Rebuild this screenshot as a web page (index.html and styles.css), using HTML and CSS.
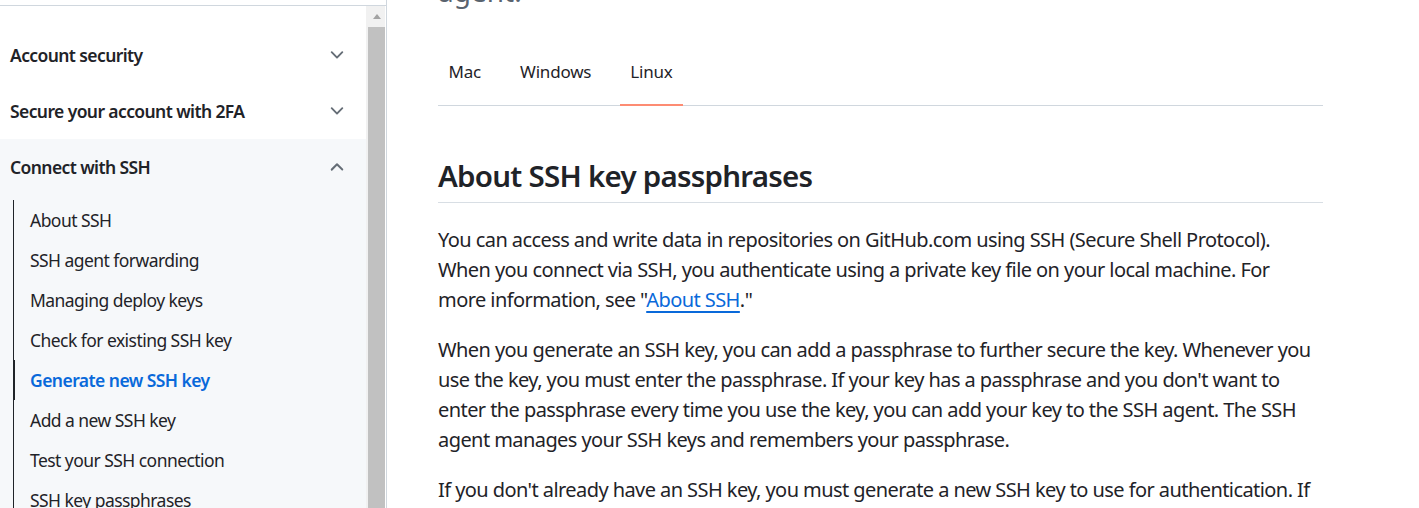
FILE: index.html
```html
<!DOCTYPE html>
<html lang="en">
<head>
<meta charset="utf-8">
<title>Generating a new SSH key</title>
<link rel="stylesheet" href="styles.css">
</head>
<body>
<aside class="sidebar">
  <div class="sidebar-scroll">
    <nav class="nav">
      <div class="cat">
        <span>Account security</span>
        <svg class="chev" viewBox="0 0 16 16" width="20" height="20"><path d="M12.78 5.22a.749.749 0 0 1 0 1.06l-4.25 4.25a.749.749 0 0 1-1.06 0L3.22 6.28a.749.749 0 1 1 1.06-1.06L8 8.939l3.72-3.719a.749.749 0 0 1 1.06 0Z"/></svg>
      </div>
      <div class="cat">
        <span>Secure your account with 2FA</span>
        <svg class="chev" viewBox="0 0 16 16" width="20" height="20"><path d="M12.78 5.22a.749.749 0 0 1 0 1.06l-4.25 4.25a.749.749 0 0 1-1.06 0L3.22 6.28a.749.749 0 1 1 1.06-1.06L8 8.939l3.72-3.719a.749.749 0 0 1 1.06 0Z"/></svg>
      </div>
      <div class="group open">
        <div class="cat">
          <span>Connect with SSH</span>
          <svg class="chev" viewBox="0 0 16 16" width="20" height="20"><path d="M3.22 10.53a.749.749 0 0 1 0-1.06l4.25-4.25a.749.749 0 0 1 1.06 0l4.25 4.25a.749.749 0 0 1-1.06 1.06L8 7.06l-3.72 3.72a.749.749 0 0 1-1.06 0Z"/></svg>
        </div>
        <ul class="sub">
          <li>About SSH</li>
          <li>SSH agent forwarding</li>
          <li>Managing deploy keys</li>
          <li>Check for existing SSH key</li>
          <li class="active">Generate new SSH key</li>
          <li>Add a new SSH key</li>
          <li>Test your SSH connection</li>
          <li>SSH key passphrases</li>
        </ul>
      </div>
    </nav>
    <div class="scrollbar">
      <div class="sb-arrow"><span class="tri"></span></div>
      <div class="sb-thumb"></div>
    </div>
  </div>
</aside>
<main class="main">
  <div class="content">
    <p class="lead">agent.</p>
    <div class="tabs">
      <span class="tab">Mac</span>
      <span class="tab">Windows</span>
      <span class="tab active">Linux</span>
    </div>
    <h2 class="h2">About SSH key passphrases</h2>
    <p class="para">You can access and write data in repositories on GitHub.com using SSH (Secure Shell Protocol).<br>When you connect via SSH, you authenticate using a private key file on your local machine. For<br>more information, see "<a class="link" href="#">About SSH</a>."</p>
    <p class="para">When you generate an SSH key, you can add a passphrase to further secure the key. Whenever you<br>use the key, you must enter the passphrase. If your key has a passphrase and you don't want to<br>enter the passphrase every time you use the key, you can add your key to the SSH agent. The SSH<br>agent manages your SSH keys and remembers your passphrase.</p>
    <p class="para">If you don't already have an SSH key, you must generate a new SSH key to use for authentication. If<br>you don't already have an SSH key, you must generate a new SSH key to use for authentication.</p>
  </div>
</main>
</body>
</html>
```
FILE: styles.css
```css
* { box-sizing: border-box; }
html, body { height: 100%; }
body {
  margin: 0;
  display: flex;
  overflow: hidden;
  font-family: "Noto Sans", "Open Sans", sans-serif;
  color: #1f2328;
  background: #ffffff;
}
.sidebar {
  width: 387px;
  flex: none;
  height: 100%;
  border-right: 1px solid #d0d7de;
  padding-top: 5px;
}
.sidebar-scroll {
  height: 100%;
  border-top: 1px solid #d0d7de;
  display: flex;
  padding-right: 1px;
}
.nav {
  width: 366px;
  flex: none;
  padding-top: 21px;
}
.cat {
  height: 56px;
  display: flex;
  align-items: center;
  justify-content: space-between;
  padding: 0 19px 0 10px;
  font-size: 17.5px;
  font-weight: 600;
  letter-spacing: -0.6px;
}
.chev { fill: #656d76; flex: none; }
.group.open { background: #f6f8fa; }
.sub {
  list-style: none;
  margin: 5px 0 0 13px;
  padding: 0;
}
.sub li {
  height: 40px;
  display: flex;
  align-items: center;
  border-left: 1px solid #1f2328;
  padding-left: 16px;
  font-size: 17.5px;
  letter-spacing: -0.55px;
}
.sub li.active {
  border-left-width: 2px;
  padding-left: 15px;
  color: #0969da;
  font-weight: 600;
}
.scrollbar {
  width: 19px;
  flex: none;
  background: #f1f1f1;
  display: flex;
  flex-direction: column;
  padding-left: 2px;
}
.sb-arrow {
  height: 21px;
  display: flex;
  align-items: center;
  justify-content: center;
}
.tri {
  width: 0; height: 0;
  border-left: 4.5px solid transparent;
  border-right: 4.5px solid transparent;
  border-bottom: 5px solid #a3a3a3;
}
.sb-thumb {
  flex: 1;
  background: #c1c1c1;
}
.main {
  flex: 1;
  min-width: 0;
  padding-left: 51px;
}
.content { width: 885px; }
.lead {
  margin: -30px 0 0;
  font-size: 28px;
  line-height: 42px;
  color: #59636e;
}
.tabs {
  margin-top: 29px;
  display: flex;
  gap: 18px;
  border-bottom: 1px solid #d0d7de;
}
.tab {
  padding: 18px 10.5px 19px;
  font-size: 17px;
  line-height: 26px;
  letter-spacing: -0.2px;
  margin-bottom: -1px;
  border-bottom: 2px solid transparent;
}
.tab.active { border-bottom-color: #fd8c73; }
.h2 {
  margin: 47px 0 0;
  font-size: 29.5px;
  font-weight: 600;
  line-height: 45px;
  padding-bottom: 4px;
  border-bottom: 1px solid #d8dee4;
  letter-spacing: -0.75px;
}
.para {
  margin: 22px 0 0;
  font-size: 20px;
  line-height: 30px;
  letter-spacing: -0.57px;
  white-space: nowrap;
}
.para + .para { margin-top: 20px; }
.link {
  color: #0969da;
  text-decoration: underline;
  text-decoration-thickness: 2px;
  text-underline-offset: 4px;
}
```
